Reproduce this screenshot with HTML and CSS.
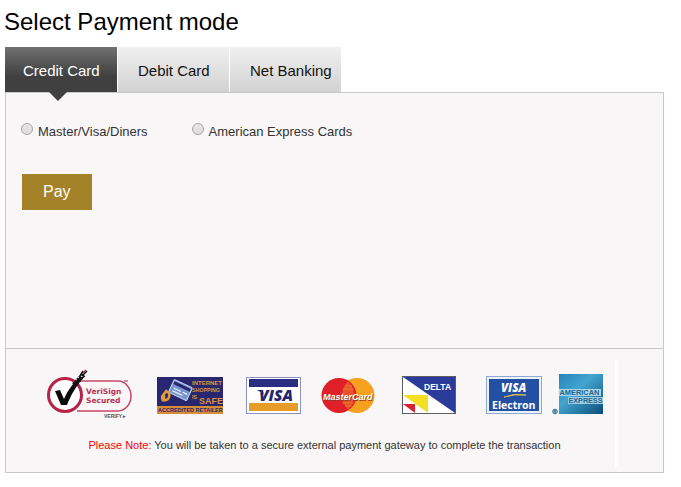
FILE: index.html
```html
<!DOCTYPE html>
<html lang="en">
<head>
<meta charset="utf-8">
<title>Select Payment mode</title>
<link rel="stylesheet" href="styles.css">
</head>
<body>
<main class="payment">
  <h1 class="title">Select Payment mode</h1>
  <nav class="tabs">
    <a class="tab active" href="#credit">Credit Card</a>
    <a class="tab" href="#debit">Debit Card</a>
    <a class="tab" href="#net">Net Banking</a>
  </nav>
  <section class="panel">
    <form class="form">
      <div class="options">
        <div class="option"><input type="radio" name="card" id="mvd"><label for="mvd">Master/Visa/Diners</label></div>
        <div class="option"><input type="radio" name="card" id="amex"><label for="amex">American Express Cards</label></div>
      </div>
      <button class="pay" type="button">Pay</button>
    </form>
    <footer class="secure">
      <div class="secure-inner">
        <div class="logos">
          <svg width="102" height="52" viewBox="46 368 102 52" role="img" aria-label="VeriSign Secured">
            <path d="M77 381H118a13 15 0 0 1 0 30H77" fill="#fbf6f7" stroke="#c44a69" stroke-width="1.500"/>
            <circle cx="65" cy="395" r="16.500" fill="#fff" stroke="#b72349" stroke-width="3"/>
            <path d="M55 391l5-1 4 9c4-9 9-16 16-22l4 0c-8 9-13 18-17 28h-6z" fill="#0b0b0b"/>
            <path d="M74 385L84 374" stroke="#171717" stroke-width="5" stroke-dasharray="2 1"/>
            <path d="M80 376l3-5M83 375l4-4" stroke="#111" stroke-width="1.500"/>
            <path d="M83 373l3-3" stroke="#b72349" stroke-width="1.500"/>
            <text x="86" y="394" class="verisign" font-size="7.500">VeriSign</text>
            <text x="86" y="403" class="verisign" font-size="7.500">Secured</text>
            <path d="M124 381h4" stroke="#b72349"/>
            <text x="104" y="418" class="verify" font-size="5">VERIFY ▸</text>
          </svg>
          <svg width="81" height="52" viewBox="156 368 81 52" role="img" aria-label="Internet shopping is safe">
            <rect x="157" y="377" width="66" height="37" fill="#28266f"/>
            <g transform="rotate(25 180 391)">
              <rect x="170" y="383" width="20" height="14" rx="1" fill="#7795ce" stroke="#c6d7ef"/>
              <path d="M171 386h18" stroke="#28266f" stroke-width="3"/>
              <path d="M173 391h8M183 391h5M173 394h11" stroke="#e9effa" stroke-width="1.200"/>
            </g>
            <path d="M167 390l-3 4v5l-2 2M166 392c5-1 4 7 0 8-5 2-5-5-1-6" fill="none" stroke="#df9a3e" stroke-width="2.500"/>
            <g class="brand" fill="#dd943c">
              <text x="192" y="385" font-size="6">INTERNET</text>
              <text x="192" y="392" font-size="5.300">SHOPPING</text>
              <text x="192" y="399" font-size="5.300">IS</text>
              <text x="199" y="404" font-size="9">SAFE</text>
            </g>
            <rect x="157" y="406" width="66" height="8" fill="#d68d35"/>
            <text x="158" y="412" class="brand" font-size="5.500" fill="#28266f">ACCREDITED RETAILER</text>
          </svg>
          <svg width="67" height="52" viewBox="245 368 67 52" role="img" aria-label="Visa">
            <rect x="246.500" y="377.500" width="54" height="36" fill="#fff" stroke="#8f91bc"/>
            <rect x="249" y="379" width="49" height="8" fill="#292e83"/>
            <rect x="249" y="403" width="49" height="8" fill="#e79c28"/>
            <text x="259" y="401" class="visa" font-size="15.500" fill="#25266c">VISA</text>
            <path d="M257 390h5l2 4z" fill="#25266c"/>
          </svg>
          <svg width="73" height="52" viewBox="320 368 73 52" role="img" aria-label="MasterCard">
            <circle cx="357" cy="395.500" r="17.500" fill="#f5a01f"/>
            <circle cx="339" cy="395.500" r="17.500" fill="#df2029"/>
            <path d="M348 381q12 14 0 29q-12-15 0-29" fill="#e9522a"/>
            <path d="M345 386h7M343 389h11M342 403h12M345 406h7" stroke="#f28b25" stroke-width=".7"/>
            <text x="323.500" y="400.500" class="master shadow" font-size="9">MasterCard</text>
            <text x="323" y="400" class="master" font-size="9">MasterCard</text>
          </svg>
          <svg width="76" height="52" viewBox="401 368 76 52" role="img" aria-label="Delta">
            <rect x="403" y="377" width="52" height="36" fill="#fff"/>
            <path d="M403 377h52v36z" fill="#2b3b99"/>
            <path d="M403 395h25v18z" fill="#f4df24"/>
            <path d="M403 404h12v9z" fill="#d72332"/>
            <rect x="402.500" y="376.500" width="53" height="37" fill="none" stroke="#5c5c65"/>
            <text x="424" y="390" class="brand" font-size="8.500" fill="#fff">DELTA</text>
          </svg>
          <svg width="58" height="52" viewBox="485 368 58 52" role="img" aria-label="Visa Electron">
            <rect x="486.500" y="376.500" width="55" height="37" fill="#eaf2fb" stroke="#91a9d0"/>
            <rect x="489" y="379" width="50" height="32" fill="#2450a3"/>
            <text x="501" y="392" class="visa" font-size="11.500" fill="#fff">VISA</text>
            <path d="M504 397q10-4 22-2-12-1-22 2z" fill="#e8c342" stroke="#e8c342" stroke-width=".8"/>
            <text x="492" y="408.500" class="electron" font-size="10.500">Electron</text>
          </svg>
          <svg width="54" height="52" viewBox="551 368 54 52" role="img" aria-label="American Express">
            <defs>
              <linearGradient id="blue" x2="1" y2="1"><stop stop-color="#2585bb"/><stop offset=".4" stop-color="#42a5cf"/><stop offset="1" stop-color="#0d4d7c"/></linearGradient>
            </defs>
            <circle cx="555" cy="411.500" r="2.300" fill="#8bbbd0" stroke="#357e9e"/>
            <path d="M554 413v-3h2l-1 2 1 1" fill="none" stroke="#246c8d" stroke-width=".6"/>
            <rect x="559" y="374" width="44" height="40" fill="url(#blue)"/>
            <rect x="559" y="389" width="42" height="7" fill="#a9d7e9"/>
            <rect x="568" y="397" width="35" height="7" fill="#a1cfe3"/>
            <text x="559.500" y="395.300" class="brand amex" font-size="7.400">AMERICAN</text>
            <text x="568.500" y="403.300" class="brand amex" font-size="7.200">EXPRESS</text>
          </svg>
        </div>
        <p class="note"><span class="alert">Please Note:</span> You will be taken to a secure external payment gateway to complete the transaction</p>
      </div>
    </footer>
  </section>
</main>
</body>
</html>
```
FILE: styles.css
```css
* { box-sizing: border-box; }
body {
  margin: 0;
  background: #fff;
  color: #333;
  font-family: "Liberation Sans", Arial, sans-serif;
}
.payment { padding: 6px 17px 14px 5px; }
.title {
  margin: 0 0 9px -1px;
  color: #000;
  font-size: 24px;
  font-weight: 400;
  line-height: 32px;
}
.tabs { display: flex; gap: 1px; }
.tab {
  position: relative;
  width: 111px;
  padding: 1px 0 0 20px;
  background: linear-gradient(#f0f0f0, #d2d2d2);
  color: #111;
  font-size: 15px;
  line-height: 44px;
  padding-top: 2px;
  height: 45px;
  text-decoration: none;
  white-space: nowrap;
}
.tab.active {
  width: 112px;
  padding-left: 18px;
  background: linear-gradient(#707070, #404040 65%);
  color: #fff;
}
.tab.active::after {
  content: "";
  position: absolute;
  top: 100%;
  left: 44px;
  border: 9px solid transparent;
  border-top-color: #404040;
  border-bottom: 0;
}
.panel { border: 1px solid #c8c8c8; background: #f8f6f7; }
.form { min-height: 255px; padding: 30px 16px; }
.options { display: flex; gap: 45px; margin: 0 0 33px; }
.option { display: flex; gap: 5px; font-size: 13px; line-height: 18px; }
.option input {
  appearance: none;
  width: 12px;
  height: 12px;
  margin: 0 0 0 -1px;
  border: 1px solid #a5a5a5;
  border-radius: 50%;
  background: linear-gradient(#e6e6e6, #dcdcdc);
}
.option input:checked { background: radial-gradient(#444 35%, #e2e2e2 40%); }
.pay {
  padding: 0 21px;
  border: 0;
  background: #a48227;
  color: #fff;
  font-family: inherit;
  font-size: 16px;
  line-height: 36px;
}
.secure { padding: 11px 45px 5px 0; border-top: 1px solid #c8c8c8; }
.secure-inner { padding: 8px 0 15px 40px; border-right: 3px solid #fff; }
.logos { display: flex; gap: 8px; }
.logos svg { flex: none; }
.note {
  margin: 18px 12px 0 0;
  font-size: 11px;
  line-height: 14px;
  text-align: center;
}
.alert { color: #f00; }
.brand, .verify { font-family: "Liberation Sans", Arial, sans-serif; font-weight: 700; }
.verisign { font-family: "DejaVu Sans", sans-serif; font-weight: 700; fill: #b83252; }
.verify { fill: #555; }
.visa { font-family: "Open Sans", sans-serif; font-style: italic; font-weight: 800; }
.master { font-family: "Liberation Sans", Arial, sans-serif; font-style: italic; font-weight: 700; fill: #fff; }
.shadow { fill: #8d3a24; }
.electron { font-family: "Open Sans", sans-serif; font-weight: 700; fill: #fff; }
.amex { fill: #23658e; }
```
